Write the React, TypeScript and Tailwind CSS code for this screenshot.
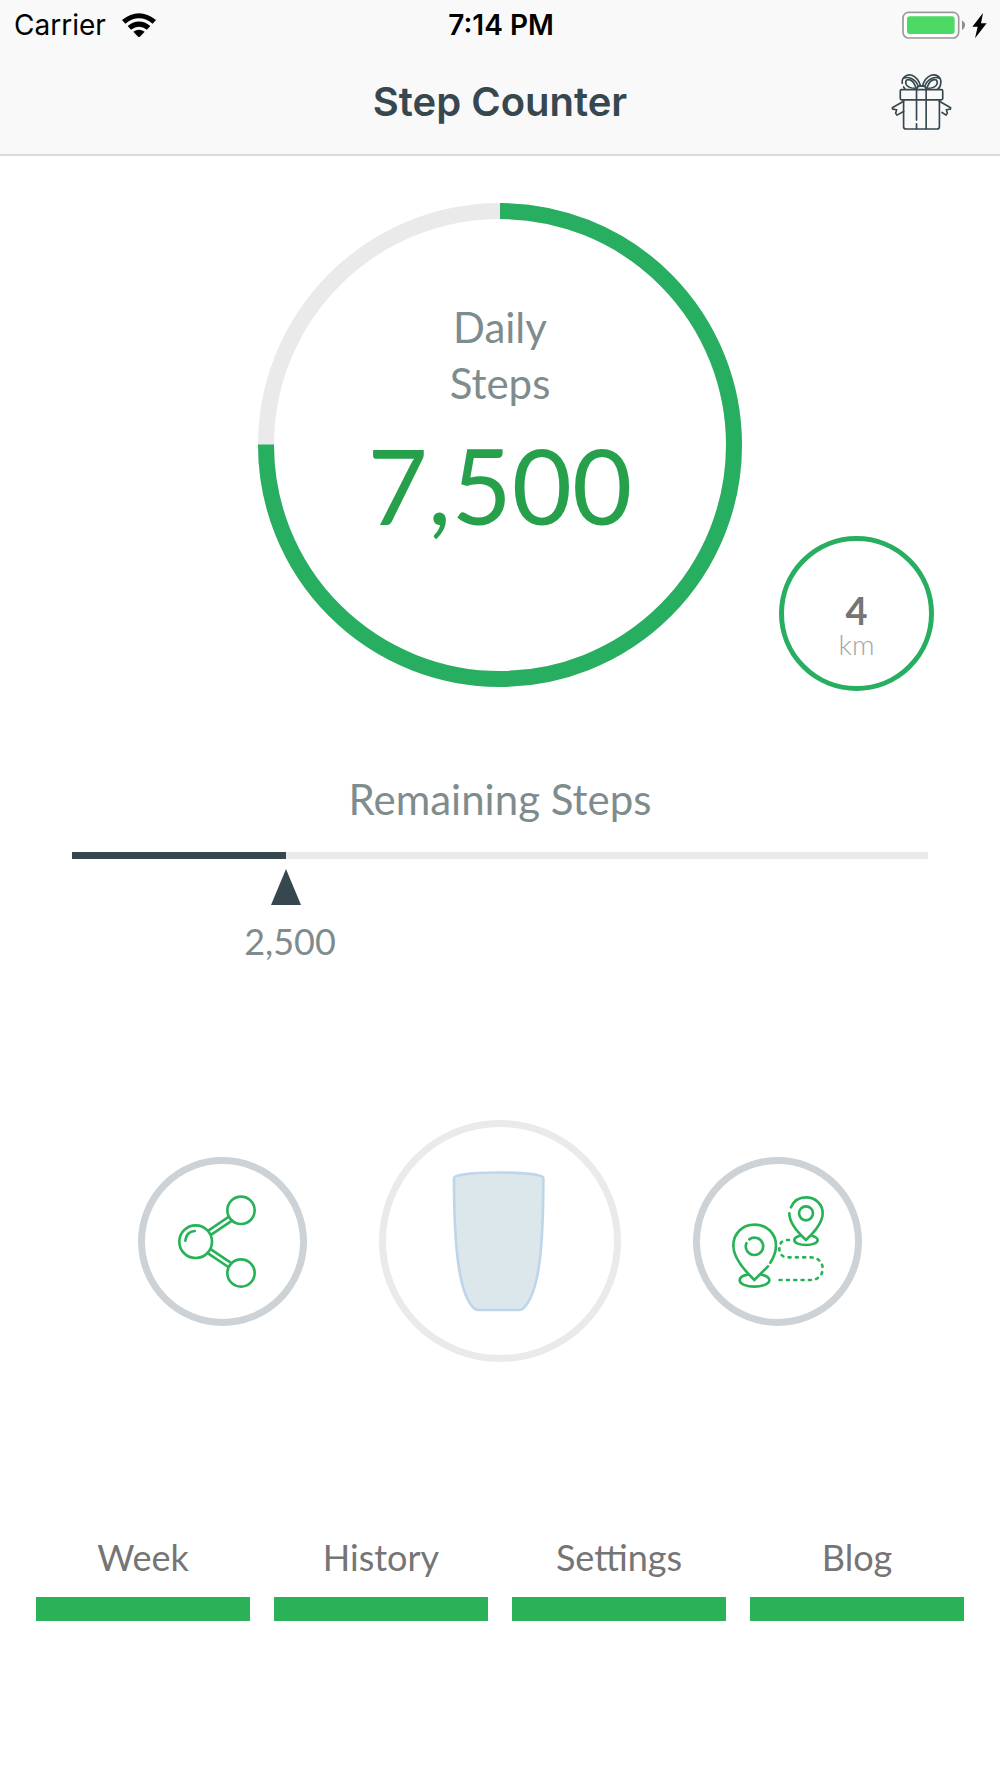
import type { ReactNode } from "react";

const GOAL = 10000;
const steps = 7500;
const remaining = GOAL - steps;

const tabs = ["Week", "History", "Settings", "Blog"];

function WifiIcon() {
  return (
    <svg viewBox="0 0 102 74" className="w-[34px]" aria-hidden="true">
      <path d="M0 21 Q51 -20 102 21 L92 32 Q51 -1 10 32 Z" />
      <path d="M17 39 Q51 12 85 39 L75 50 Q51 32 27 50 Z" />
      <path d="M34 56 Q51 44 68 56 L51 74 Z" />
    </svg>
  );
}

function BatteryIcon() {
  return (
    <svg viewBox="0 0 258 84" className="w-[86px]" aria-hidden="true">
      <rect x="3" y="4" width="167" height="77" rx="17" fill="#fff" stroke="#999" strokeWidth="5" />
      <rect x="15" y="16" width="143" height="53" rx="8" fill="#4cd964" />
      <path d="M180 28 Q189 34 189 43 Q189 52 180 58 Z" fill="#8e8e8e" />
      <path d="M243 6 L211 47 H227 L219 82 L254 37 H237 Z" fill="#000" />
    </svg>
  );
}

function GiftIcon() {
  return (
    <svg
      viewBox="30 36 190 174"
      className="w-[63px]"
      fill="none"
      stroke="#36474f"
      strokeWidth="5"
      strokeLinecap="round"
      strokeLinejoin="round"
      aria-hidden="true"
    >
      <rect x="61" y="86" width="128" height="31" rx="4" />
      <path d="M71 117 V198 Q71 205 78 205 H172 Q179 205 179 198 V117" />
      <path d="M110 82 V178 M110 189 V204 M139 82 V204" />
      <path d="M71 121 L37 141 L38 145 L50 147 L47 157 L51 163 L71 152" />
      <path d="M179 121 L213 141 L212 145 L200 147 L203 157 L199 163 L187 155" />
      <path d="M111 84 Q112 75 125 75 Q138 75 139 84" />
      <path d="M67 67 C64 47 82 39 96 43 C108 48 118 61 122 75 M71 78 L75 84 M71 52 C86 45 108 55 115 76" />
      <path d="M183 66 C186 47 168 39 154 43 C142 48 132 61 128 75 M179 52 C164 45 142 55 135 76 M183 66 C183 75 179 81 174 85" />
      <path d="M108 79 C101 60 90 54 80 57 C72 70 84 82 106 82" />
      <path d="M142 79 C149 60 160 54 170 57 C178 70 166 82 144 82" />
    </svg>
  );
}

function ShareIcon() {
  return (
    <svg
      viewBox="45 39 465 465"
      fill="none"
      stroke="#27b257"
      strokeWidth="8"
      strokeLinecap="round"
      aria-hidden="true"
    >
      <circle cx="197" cy="272" r="49" />
      <circle cx="333" cy="178" r="41" />
      <circle cx="333" cy="366" r="41" />
      <path d="M166 269 Q169 242 194 240" />
      <path d="M235 239 L295 198 M244 251 L306 209" />
      <path d="M243 295 L305 337 M234 307 L295 348" />
    </svg>
  );
}

function GlassIcon() {
  return (
    <svg viewBox="48 50 684 684" aria-hidden="true">
      <path
        d="M252 203 C252 181 520 181 520 203 C520 430 505 550 460 594 Q455 599 448 599 H326 Q319 599 312 594 C265 550 252 400 252 203 Z"
        fill="#dce7ec"
        stroke="#bfd6ea"
        strokeWidth="8"
      />
    </svg>
  );
}

function RouteIcon() {
  return (
    <svg
      viewBox="60 39 465 465"
      fill="none"
      stroke="#27b257"
      strokeWidth="8"
      strokeLinecap="round"
      aria-hidden="true"
    >
      <path d="M264 346 L223 387 C190 355 160 318 160 284 C160 247 188 221 224 221 C260 221 288 247 288 284 Q288 308 271 335" />
      <path d="M208 265 A26 26 0 1 1 199 277" />
      <path d="M203 371 C187 374 179 380 179 388 C179 399 199 407 223 407 C247 407 268 399 268 388 C268 380 260 374 244 371" />
      <path d="M333 169 C341 149 358 139 378 139 C407 139 428 160 428 187 C428 213 405 242 378 267 C350 242 328 213 328 187" />
      <circle cx="378" cy="187" r="21" />
      <path d="M360 254 C349 257 343 262 343 267 C343 276 359 282 378 282 C397 282 413 276 413 267 C413 262 406 257 396 254" />
      <path
        d="M327 267 H322 C305 267 298 279 298 293 C298 308 307 319 323 319 H392 C414 319 428 334 428 353 C428 372 414 387 393 387 H285"
        strokeDasharray="6 16"
      />
    </svg>
  );
}

function StepRing({ value, goal }: { value: number; goal: number }) {
  const radius = 234;
  const length = 2 * Math.PI * radius;

  return (
    <div className="grid w-[484px] place-items-center">
      <svg
        viewBox="0 0 484 484"
        className="col-start-1 row-start-1 w-full -rotate-90"
        fill="none"
        strokeWidth="16"
        aria-hidden="true"
      >
        <circle cx="242" cy="242" r={radius} stroke="#eaeaea" />
        <circle
          cx="242"
          cy="242"
          r={radius}
          stroke="#27ae60"
          strokeDasharray={`${(length * value) / goal} ${length}`}
        />
      </svg>
      <div className="col-start-1 row-start-1 pb-8 text-center">
        <h2 className="mx-auto w-32 text-[42px] leading-14 text-[#7f8c8d]">Daily Steps</h2>
        <p className="text-[104px] leading-[148px] text-[#27a04c]">{value.toLocaleString("en-US")}</p>
      </div>
    </div>
  );
}

function RoundButton({ label, children }: { label: string; children: ReactNode }) {
  return (
    <button type="button" aria-label={label} className="size-[169px] rounded-full border-[7px] border-[#cdd2d6]">
      {children}
    </button>
  );
}

export default function App() {
  const percent = (remaining / GOAL) * 100;

  return (
    <div className="min-h-screen bg-white font-['Lato',sans-serif]">
      <header className="border-b-2 border-[#dcdcdc] bg-[#f9f9f9] font-['Inter',sans-serif]">
        <div className="grid h-[50px] grid-cols-[1fr_auto_1fr] items-center pr-3 pl-[14px] text-[28px] text-black">
          <div className="flex items-center gap-4">
            <span>Carrier</span>
            <WifiIcon />
          </div>
          <time className="font-semibold">7:14 PM</time>
          <div className="flex justify-end">
            <BatteryIcon />
          </div>
        </div>
        <div className="grid h-[104px] grid-cols-[1fr_auto_1fr] items-center px-[47px]">
          <h1 className="col-start-2 text-[40px] font-semibold text-[#36474f]">Step Counter</h1>
          <button type="button" aria-label="Rewards" className="justify-self-end">
            <GiftIcon />
          </button>
        </div>
      </header>

      <main>
        <section className="grid grid-cols-[1fr_auto_1fr] items-end pt-[47px]">
          <div className="col-start-2 pb-1">
            <StepRing value={steps} goal={GOAL} />
          </div>
          <div className="mr-[66px] flex size-[155px] flex-col items-center justify-center justify-self-end rounded-full border-5 border-[#27ae60] pt-6">
            <span className="text-[38px] leading-9 font-bold text-[#757575]">4</span>
            <span className="text-[28px] leading-8 font-light text-[#a5a5a5]">km</span>
          </div>
        </section>

        <section className="px-[72px] pt-20 text-[#7f8c8d]">
          <h2 className="text-center text-[42px] leading-14">Remaining Steps</h2>
          <div
            role="progressbar"
            aria-label="Remaining Steps"
            aria-valuenow={remaining}
            aria-valuemax={GOAL}
            className="mt-[25px] h-[7px] bg-[#eaeaea]"
          >
            <div className="h-full bg-[#36474f]" style={{ width: `${percent}%` }} />
          </div>
          <div className="flex">
            <div style={{ width: `${percent}%` }} />
            <div className="flex w-0 flex-col items-center pt-2.5">
              <svg viewBox="0 0 30 36" className="w-[30px] shrink-0" fill="#36474f" aria-hidden="true">
                <path d="M15 0 L30 36 H0 Z" />
              </svg>
              <span className="pt-3 pl-2 text-[36px] leading-12">{remaining.toLocaleString("en-US")}</span>
            </div>
          </div>
        </section>

        <section className="flex items-center justify-center gap-[72px] pt-[155px]">
          <RoundButton label="Share">
            <ShareIcon />
          </RoundButton>
          <button type="button" aria-label="Water" className="size-[242px] rounded-full border-[7px] border-[#eaeaea]">
            <GlassIcon />
          </button>
          <RoundButton label="Routes">
            <RouteIcon />
          </RoundButton>
        </section>
      </main>

      <nav className="grid grid-cols-4 gap-6 px-9 pt-[171px]">
        {tabs.map((tab) => (
          <a
            key={tab}
            href={`#${tab.toLowerCase()}`}
            className="border-b-24 border-[#2bb259] pb-4 text-center text-[36px] leading-12 text-[#757575]"
          >
            {tab}
          </a>
        ))}
      </nav>
    </div>
  );
}
